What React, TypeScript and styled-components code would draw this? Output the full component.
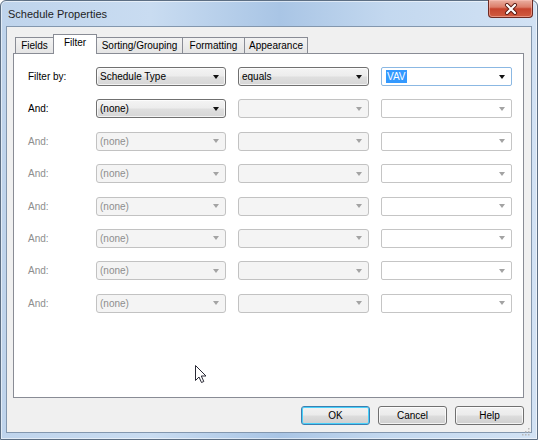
import React from "react";
import styled, { createGlobalStyle, css } from "styled-components";

const Global = createGlobalStyle`
  html, body { margin: 0; padding: 0; background: #ffffff; }
  body { width: 538px; height: 440px; overflow: hidden; font-family: "Liberation Sans", Arial, sans-serif; }
  * { box-sizing: border-box; }
`;

const Window = styled.div`
  width: 538px;
  height: 440px;
  border: 1px solid #5d6f84;
  border-radius: 6px 6px 0 0;
  background: linear-gradient(to right, #bfd4ec 0%, #c9dcf1 28%, #a9c5e5 52%, #c3d8ef 72%, #d2e2f4 100%);
  padding: 0 5px 6px 5px;
  display: flex;
  flex-direction: column;
  box-shadow: inset 0 0 0 1px rgba(255, 255, 255, 0.55);
`;

const TitleBar = styled.div`
  height: 25px;
  display: flex;
  align-items: center;
  padding-left: 2px;
  position: relative;
`;

const Title = styled.span`
  font-size: 11px;
  color: #1e1e1e;
  padding-top: 1px;
`;

const CloseBtn = styled.div`
  margin-left: auto;
  margin-right: -1px;
  align-self: flex-start;
  margin-top: -1px;
  width: 45px;
  height: 18px;
  border: 1px solid #6e2a22;
  border-top: none;
  border-radius: 0 0 4px 4px;
  background: linear-gradient(#eab0a2 0%, #dc7d69 42%, #c6442e 52%, #d05c40 100%);
  display: flex;
  align-items: center;
  justify-content: center;
  box-shadow: inset 0 0 0 1px rgba(255, 200, 190, 0.5);
`;

const Client = styled.div`
  flex: 1;
  border: 1px solid #8397ae;
  background: #f0f0f0;
  padding: 7px 7px 7px 6px;
  display: flex;
  flex-direction: column;
  position: relative;
`;

const TabStrip = styled.div`
  height: 20px;
  margin-bottom: -1px;
  padding-left: 2px;
  display: flex;
  align-items: flex-end;
  position: relative;
  z-index: 1;
`;

const Tab = styled.div<{ $w: number; $active?: boolean }>`
  width: ${(p) => p.$w}px;
  height: 16px;
  margin-bottom: 1px;
  margin-left: -1px;
  &:first-child { margin-left: 0; }
  border: 1px solid #898c95;
  border-bottom: none;
  background: linear-gradient(#f3f3f3, #e5e5e5);
  font-size: 10px;
  color: #000;
  display: flex;
  align-items: center;
  justify-content: center;
  padding-bottom: 1px;
  ${(p) =>
    p.$active &&
    css`
      height: 20px;
      margin-bottom: 0;
      background: #ffffff;
      position: relative;
      z-index: 2;
      padding-bottom: 4px;
    `}
`;

const Panel = styled.div`
  height: 345px;
  border: 1px solid #898c95;
  background: #ffffff;
  padding: 13px 0 0 14px;
`;

const FilterGrid = styled.div`
  display: grid;
  grid-template-columns: 56px 130px 131px 131px;
  grid-auto-rows: 19px;
  column-gap: 12px;
  row-gap: 13.4px;
  align-items: center;
`;

const Label = styled.span<{ $dim?: boolean }>`
  font-size: 10px;
  color: ${(p) => (p.$dim ? "#8e8e8e" : "#000")};
`;

type Variant = "button" | "disabled" | "edit" | "focus";

const ComboBox = styled.div<{ $v: Variant }>`
  height: 19px;
  border-radius: 3px;
  display: flex;
  align-items: center;
  padding: 0 6px 0 3px;
  font-size: 10px;
  ${(p) =>
    p.$v === "button" &&
    css`
      border: 1px solid #707070;
      background: linear-gradient(#f4f4f4 0%, #ececec 48%, #dfdfdf 52%, #d6d6d6 100%);
      color: #000;
      box-shadow: inset 0 0 0 1px rgba(255, 255, 255, 0.7);
    `}
  ${(p) =>
    p.$v === "disabled" &&
    css`
      border: 1px solid #c2c2c2;
      background: #f4f4f4;
      color: #8e8e8e;
    `}
  ${(p) =>
    p.$v === "edit" &&
    css`
      border: 1px solid #c5c5c5;
      border-radius: 2px;
      background: #ffffff;
      color: #000;
    `}
  ${(p) =>
    p.$v === "focus" &&
    css`
      border: 1px solid #8bb8e3;
      border-radius: 2px;
      background: #ffffff;
      color: #000;
      padding-left: 4px;
    `}
`;

const ComboText = styled.span`
  flex: 1;
  white-space: nowrap;
`;

const Selected = styled.span`
  background: #3399ff;
  color: #ffffff;
  padding: 1px 1px;
`;

const Arrow = styled.span<{ $dim?: boolean }>`
  width: 0;
  height: 0;
  border-left: 3.5px solid transparent;
  border-right: 3.5px solid transparent;
  border-top: 4px solid ${(p) => (p.$dim ? "#a3a3a3" : "#111")};
`;

const ButtonRow = styled.div`
  margin-top: 8px;
  display: flex;
  justify-content: flex-end;
  gap: 8px;
  padding-right: 0;
`;

const Button = styled.div<{ $default?: boolean }>`
  width: 69px;
  height: 19px;
  border: 1px solid ${(p) => (p.$default ? "#3c7fb1" : "#707070")};
  border-radius: 3px;
  background: linear-gradient(#f2f2f2 0%, #ebebeb 48%, #dddddd 52%, #cfcfcf 100%);
  box-shadow: inset 0 0 0 1px ${(p) => (p.$default ? "#48d0fa" : "rgba(255,255,255,0.75)")};
  font-size: 10px;
  color: #000;
  display: flex;
  align-items: center;
  justify-content: center;
`;

const Grip = styled.div`
  position: absolute;
  right: 1px;
  bottom: 1px;
  width: 9px;
  height: 9px;
`;

const Cursor = styled.div`
  position: absolute;
  left: 188px;
  top: 338px;
  width: 13px;
  height: 20px;
`;

type Row = {
  label: string;
  dim: boolean;
  c1: { v: Variant; text: string };
  c2: { v: Variant; text: string };
  c3: { v: Variant; text: string };
};

const rows: Row[] = [
  { label: "Filter by:", dim: false, c1: { v: "button", text: "Schedule Type" }, c2: { v: "button", text: "equals" }, c3: { v: "focus", text: "VAV" } },
  { label: "And:", dim: false, c1: { v: "button", text: "(none)" }, c2: { v: "disabled", text: "" }, c3: { v: "edit", text: "" } },
  ...Array.from({ length: 6 }, () => ({
    label: "And:",
    dim: true,
    c1: { v: "disabled" as Variant, text: "(none)" },
    c2: { v: "disabled" as Variant, text: "" },
    c3: { v: "edit" as Variant, text: "" },
  })),
];

function Combo({ v, text }: { v: Variant; text: string }) {
  const dimArrow = v === "disabled" || v === "edit";
  return (
    <ComboBox $v={v}>
      <ComboText>{v === "focus" ? <Selected>{text}</Selected> : text}</ComboText>
      <Arrow $dim={dimArrow} />
    </ComboBox>
  );
}

export default function App() {
  return (
    <>
      <Global />
      <Window>
        <TitleBar>
          <Title>Schedule Properties</Title>
          <CloseBtn>
            <svg width="14" height="12" viewBox="0 0 14 12">
              <path d="M3 2 L11 10 M11 2 L3 10" stroke="#5a1a12" strokeWidth="4" strokeLinecap="round" />
              <path d="M3 2 L11 10 M11 2 L3 10" stroke="#ffffff" strokeWidth="2.2" strokeLinecap="round" />
            </svg>
          </CloseBtn>
        </TitleBar>
        <Client>
          <TabStrip>
            <Tab $w={39}>Fields</Tab>
            <Tab $w={44} $active>Filter</Tab>
            <Tab $w={87}>Sorting/Grouping</Tab>
            <Tab $w={63}>Formatting</Tab>
            <Tab $w={64}>Appearance</Tab>
          </TabStrip>
          <Panel>
            <FilterGrid>
              {rows.map((r, i) => (
                <React.Fragment key={i}>
                  <Label $dim={r.dim}>{r.label}</Label>
                  <Combo v={r.c1.v} text={r.c1.text} />
                  <Combo v={r.c2.v} text={r.c2.text} />
                  <Combo v={r.c3.v} text={r.c3.text} />
                </React.Fragment>
              ))}
            </FilterGrid>
          </Panel>
          <ButtonRow>
            <Button $default>OK</Button>
            <Button>Cancel</Button>
            <Button>Help</Button>
          </ButtonRow>
          <Grip>
            <svg width="9" height="9" viewBox="0 0 9 9">
              {[
                [7, 1], [7, 4], [4, 4], [7, 7], [4, 7], [1, 7],
              ].map(([x, y], i) => (
                <rect key={i} x={x} y={y} width="1.5" height="1.5" fill="#b8b8b8" />
              ))}
            </svg>
          </Grip>
          <Cursor>
            <svg width="13" height="20" viewBox="0 0 13 20">
              <path d="M0.5 0.5 L0.5 15.5 L4 12 L6.5 17.5 L8.8 16.5 L6.3 11 L11 11 Z" fill="#ffffff" stroke="#2a2a36" strokeWidth="1" strokeLinejoin="round" />
            </svg>
          </Cursor>
        </Client>
      </Window>
    </>
  );
}
